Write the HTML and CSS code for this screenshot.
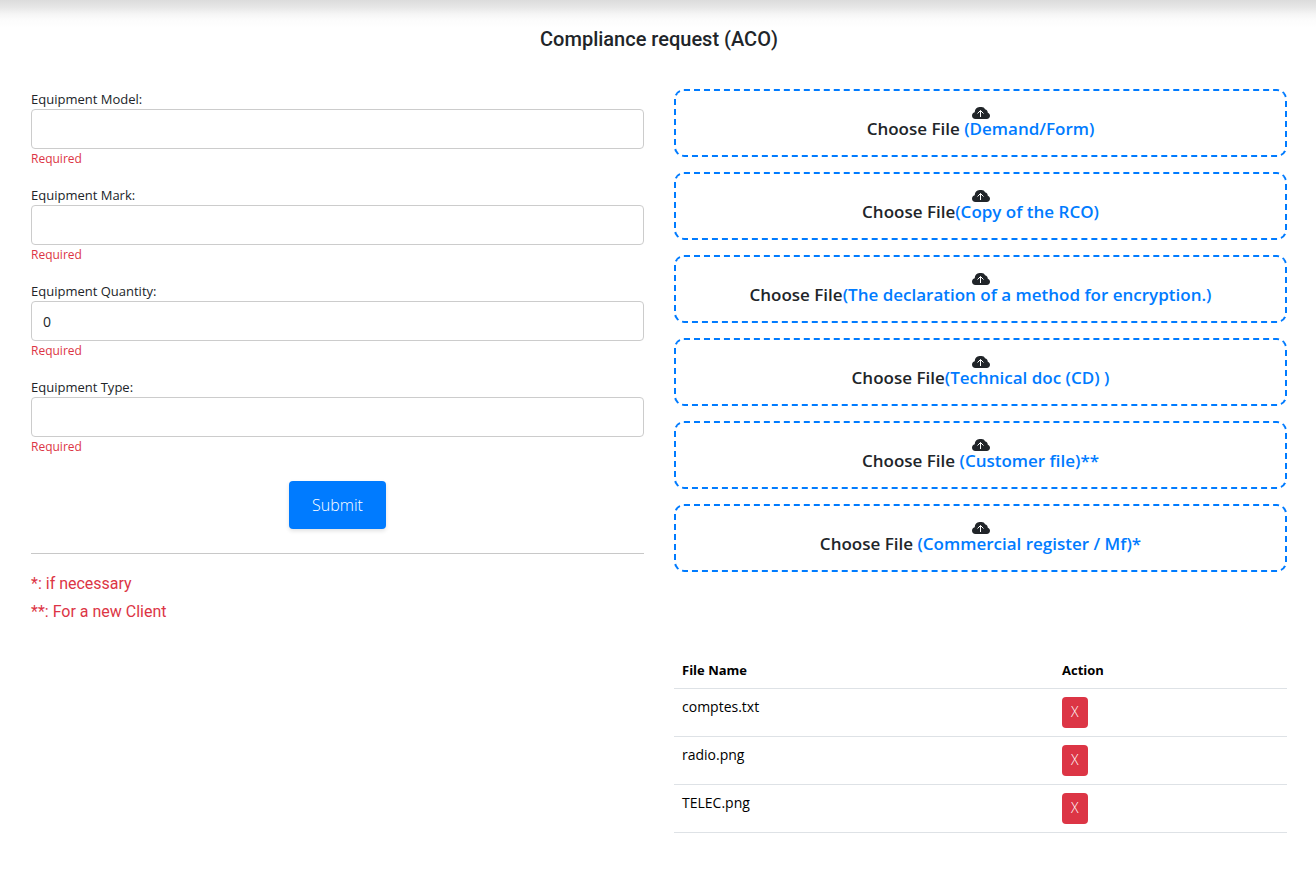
FILE: index.html
```html
<!DOCTYPE html>
<html lang="en">
<head>
<meta charset="utf-8">
<meta name="viewport" content="width=device-width, initial-scale=1">
<title>Compliance request (ACO)</title>
<link rel="stylesheet" href="styles.css">
</head>
<body>
<svg class="sprite" aria-hidden="true">
  <symbol id="cloud-upload" viewBox="0 0 18 12">
    <path fill="#212529" d="M3.500 12C1.300 12 0 10.600 0 8.600C0 6.900 1 5.600 2.700 5.200C2.900 2.200 4.600 0 7.500 0h2C11.200 0 12.400 .9 13 2.200C14.800 2.500 15.700 4 15.800 5.700C17.200 6.200 18 7.300 18 8.800C18 10.700 16.700 12 14.700 12Z"/>
    <path fill="none" stroke="#fff" d="M8.500 10V3.500M5.500 6.500L8.500 3.500L11.500 6.500"/>
  </symbol>
</svg>
<main class="page">
  <h1 class="title">Compliance request (ACO)</h1>
  <div class="columns">
    <section>
      <form class="form">
        <div class="field"><label for="model">Equipment Model:</label><input id="model" type="text"><small>Required</small></div>
        <div class="field"><label for="mark">Equipment Mark:</label><input id="mark" type="text"><small>Required</small></div>
        <div class="field"><label for="quantity">Equipment Quantity:</label><input id="quantity" type="text" inputmode="numeric" value="0"><small>Required</small></div>
        <div class="field"><label for="type">Equipment Type:</label><input id="type" type="text"><small>Required</small></div>
        <button class="submit" type="submit">Submit</button>
      </form>
      <hr class="rule">
      <p class="note">*: if necessary</p>
      <p class="note">**: For a new Client</p>
    </section>
    <section>
      <div class="uploads">
        <label class="upload"><input type="file"><svg class="cloud"><use href="#cloud-upload"/></svg><span>Choose File <span class="kind">(Demand/Form)</span></span></label>
        <label class="upload"><input type="file"><svg class="cloud"><use href="#cloud-upload"/></svg><span>Choose File<span class="kind">(Copy of the RCO)</span></span></label>
        <label class="upload"><input type="file"><svg class="cloud"><use href="#cloud-upload"/></svg><span>Choose File<span class="kind">(The declaration of a method for encryption.)</span></span></label>
        <label class="upload"><input type="file"><svg class="cloud"><use href="#cloud-upload"/></svg><span>Choose File<span class="kind">(Technical doc (CD) )</span></span></label>
        <label class="upload"><input type="file"><svg class="cloud"><use href="#cloud-upload"/></svg><span>Choose File <span class="kind">(Customer file)**</span></span></label>
        <label class="upload"><input type="file"><svg class="cloud"><use href="#cloud-upload"/></svg><span>Choose File <span class="kind">(Commercial register / Mf)*</span></span></label>
      </div>
      <table class="files">
        <thead><tr><th class="name">File Name</th><th>Action</th></tr></thead>
        <tbody>
          <tr><td>comptes.txt</td><td><button class="remove" type="button">X</button></td></tr>
          <tr><td>radio.png</td><td><button class="remove" type="button">X</button></td></tr>
          <tr><td>TELEC.png</td><td><button class="remove" type="button">X</button></td></tr>
        </tbody>
      </table>
    </section>
  </div>
</main>
</body>
</html>
```

FILE: styles.css
```css
* {
  box-sizing: border-box;
}

body {
  margin: 0;
  background: #fff linear-gradient(#dcdcdc, #e6e6e6 7px, #f5f5f5 14px, #fcfcfc 20px, #fff 28px) no-repeat;
  color: #212529;
  font: 14px/20px "Trebuchet MS", "Open Sans", sans-serif;
}

.sprite {
  display: none;
}

.page {
  padding: 27px 29px 32px 31px;
}

.title {
  margin: 0 0 38px;
  font: 500 20px/24px Roboto, sans-serif;
  text-align: center;
}

.columns {
  display: grid;
  grid-template-columns: 1fr 1fr;
  gap: 30px;
}

.form {
  display: flex;
  flex-direction: column;
  gap: 16px;
}

.field {
  display: flex;
  flex-direction: column;
}

.field label {
  font-size: 13px;
}

.field input {
  width: 100%;
  height: 40px;
  padding: 8px 11px;
  border: 1px solid #ccc;
  border-radius: 4px;
  background: #fff;
  color: #212529;
  font: inherit;
}

.field small {
  color: #dc3545;
  font-size: 12px;
  line-height: 20px;
}

.submit {
  align-self: center;
  margin-top: 8px;
  padding: 12px 23px;
  border: 0;
  border-radius: 4px;
  background: #007bff;
  box-shadow: 0 2px 4px rgba(0, 0, 0, .12);
  color: #fff;
  font: 300 16px/24px "Trebuchet MS", "Open Sans", sans-serif;
}

.rule {
  margin: 24px 0 16px;
  border: 0;
  border-top: 1px solid #c8c8c8;
}

.note {
  margin: 0;
  color: #dc3545;
  font: 16px/28px Roboto, sans-serif;
}

.uploads {
  display: grid;
  gap: 15px;
}

.upload {
  display: flex;
  flex-direction: column;
  align-items: center;
  padding: 16px;
  border: 2px dashed #007bff;
  border-radius: 10px;
  font-size: 17px;
  font-weight: 600;
  line-height: 20px;
  cursor: pointer;
}

.upload input {
  position: absolute;
  width: 1px;
  height: 1px;
  opacity: 0;
}

.cloud {
  width: 18px;
  height: 12px;
}

.kind {
  color: #007bff;
}

.files {
  width: 100%;
  margin-top: 80px;
  border-collapse: collapse;
  color: #000;
}

.files th,
.files td {
  padding: 8px;
  border-bottom: 1px solid #dee2e6;
  text-align: left;
  vertical-align: top;
}

.files th {
  font-size: 13px;
}

.files .name {
  width: 62%;
}

.remove {
  display: block;
  padding: 5px 9px 6px;
  border: 0;
  border-radius: 4px;
  background: #dc3545;
  color: #fff;
  font: 300 14px/20px "Trebuchet MS", "Open Sans", sans-serif;
}
```
